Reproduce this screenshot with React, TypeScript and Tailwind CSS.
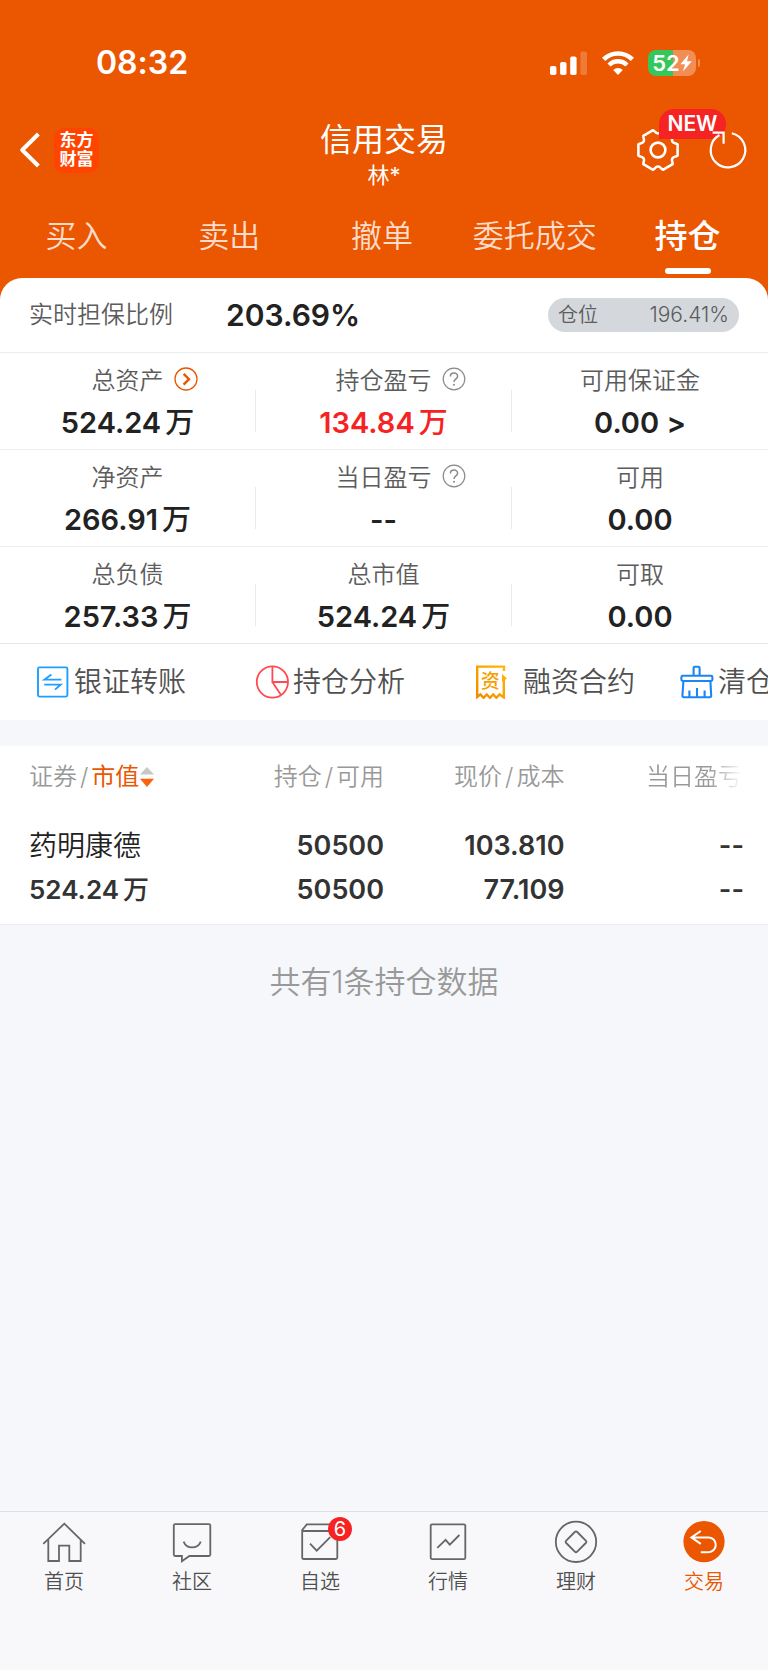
import React from 'react';

const GEAR_PATH = (() => {
  const pt = (deg: number, r: number) => {
    const a = (deg * Math.PI) / 180;
    return `${(22 + r * Math.cos(a)).toFixed(2)} ${(22 + r * Math.sin(a)).toFixed(2)}`;
  };
  let d = '';
  for (let k = 0; k < 6; k++) {
    const t = k * 60;
    d += `${k === 0 ? 'M' : 'L'}${pt(t - 16, 20.4)}`;
    d += ` L${pt(t + 16, 20.4)}`;
    d += ` L${pt(t + 20, 18.8)} Q${pt(t + 30, 14.6)} ${pt(t + 40, 18.8)} `;
  }
  return d + 'Z';
})();

function StatusBar() {
  return (
    <div className="flex h-[122px] items-center justify-between pt-1 pr-[68px] pl-24">
      <span className="text-[32px] leading-10 font-semibold">08:32</span>
      <div className="flex items-center gap-[13px]">
        <svg width="38" height="26" viewBox="0 0 38 26" fill="#fff" aria-hidden="true">
          <rect x="0" y="16" width="6.4" height="9" rx="1.8" />
          <rect x="10.1" y="12" width="6.4" height="13" rx="1.8" />
          <rect x="20.2" y="6.5" width="6.4" height="18.5" rx="1.8" />
          <rect x="30.4" y="1.5" width="6.6" height="23.5" rx="1.8" opacity="0.22" />
        </svg>
        <svg width="34" height="26" viewBox="0 0 34 26" fill="none" stroke="#fff" aria-hidden="true">
          <path d="M2.6 9.4 A20.4 20.4 0 0 1 31.4 9.4" strokeWidth="4.6" />
          <path d="M8 15 A12.8 12.8 0 0 1 26 15" strokeWidth="4.4" />
          <path d="M17 25 L12.2 20.1 A6.8 6.8 0 0 1 21.8 20.1 Z" fill="#fff" stroke="none" />
        </svg>
        <div className="flex items-center gap-0.5">
          <div className="flex h-[26px] w-12 items-center justify-center overflow-hidden rounded-lg bg-linear-to-r from-[#34c759] from-52% to-[#f28e55] to-52%">
            <span className="text-[22px] leading-6 font-semibold">52</span>
            <svg width="12" height="18" viewBox="0 0 12 18" fill="#fff" aria-hidden="true">
              <path d="M8.6 0.5 L0.4 10.2 H5 L3 17.6 L11.8 7.2 H7 Z" />
            </svg>
          </div>
          <span className="h-2 w-0.5 rounded-r-full bg-[#f28e55]" />
        </div>
      </div>
    </div>
  );
}

function TitleBar() {
  return (
    <div className="grid grid-cols-[1fr_auto_1fr] items-start">
      <div className="flex h-14 items-center gap-2.5 pl-4">
        <button type="button" aria-label="返回">
          <svg width="28" height="40" viewBox="0 0 28 40" fill="none" stroke="#fff" strokeWidth="4" strokeLinejoin="round">
            <path d="M22.4 4 L6.2 20 L22.4 36" />
          </svg>
        </button>
        <a
          href="#home"
          className="flex size-[45px] flex-col items-center justify-center rounded-[10px] bg-[#ff4400] text-[17px] leading-[19px] font-bold"
        >
          <span>东方</span>
          <span>财富</span>
        </a>
      </div>
      <div className="text-center">
        <h1 className="text-[32px] leading-9">信用交易</h1>
        <p className="text-[22px] leading-[34px]">林*</p>
      </div>
      <div className="flex h-14 items-center justify-end gap-[26px] pr-[18px]">
        <button type="button" aria-label="设置" className="relative">
          <svg width="44" height="44" viewBox="0 0 44 44" fill="none" stroke="#fff" strokeWidth="2.6" strokeLinejoin="round">
            <path d={GEAR_PATH} />
            <circle cx="22" cy="22" r="7.4" />
          </svg>
          <span className="absolute -top-[19px] left-[23px] flex h-[30px] w-[67px] items-center justify-center rounded-[15px] rounded-bl-none bg-[#f52323] text-[21px] leading-6 font-semibold">
            NEW
          </span>
        </button>
        <button type="button" aria-label="刷新" className="relative">
          <svg width="44" height="44" viewBox="0 0 44 44" fill="none" stroke="#fff" strokeWidth="2.2">
            <path d="M25.8 5.2 A17.3 17.3 0 1 1 13.5 7" />
            <path d="M6.6 4.6 H17.6 V15.8" />
          </svg>
        </button>
      </div>
    </div>
  );
}

function Tabs() {
  const tabs = ['买入', '卖出', '撤单', '委托成交', '持仓'];
  return (
    <nav className="grid grid-cols-5 pt-5 pr-1 pb-1">
      {tabs.map((t) => {
        const active = t === '持仓';
        return (
          <button key={t} type="button" className="flex flex-col items-center gap-2">
            <span
              className={
                active
                  ? 'text-[33px] leading-12 font-medium whitespace-nowrap'
                  : 'text-[31px] leading-12 font-[350] whitespace-nowrap text-[#fcdccb]'
              }
            >
              {t}
            </span>
            {active && <span className="h-1.5 w-[46px] rounded-full bg-white" />}
          </button>
        );
      })}
    </nav>
  );
}

function Hint() {
  return (
    <svg width="24" height="24" viewBox="0 0 24 24" fill="none" stroke="#8a8a8a" strokeWidth="1.2" aria-hidden="true">
      <circle cx="12" cy="12" r="10.8" />
      <path d="M8.4 9.4 C8.4 4.9 15.6 4.9 15.6 9.2 C15.6 12 12 11.8 12 15" strokeWidth="1.5" />
      <circle cx="12" cy="17.8" r="1" fill="#8a8a8a" stroke="none" />
    </svg>
  );
}

function More() {
  return (
    <svg width="24" height="24" viewBox="0 0 24 24" fill="none" stroke="#eb5600" aria-hidden="true">
      <circle cx="12" cy="12" r="11" strokeWidth="1.3" />
      <path d="M9.6 6.8 L15 12.2 L9.6 17.6" strokeWidth="2.4" />
    </svg>
  );
}

type Stat = { label: string; value: string; unit?: string; icon?: 'more' | 'hint'; red?: boolean };

const STATS: Stat[][] = [
  [
    { label: '总资产', value: '524.24', unit: '万', icon: 'more' },
    { label: '持仓盈亏', value: '134.84', unit: '万', icon: 'hint', red: true },
    { label: '可用保证金', value: '0.00 >' },
  ],
  [
    { label: '净资产', value: '266.91', unit: '万' },
    { label: '当日盈亏', value: '--', icon: 'hint' },
    { label: '可用', value: '0.00' },
  ],
  [
    { label: '总负债', value: '257.33', unit: '万' },
    { label: '总市值', value: '524.24', unit: '万' },
    { label: '可取', value: '0.00' },
  ],
];

function StatCell({ stat, last }: { stat: Stat; last: boolean }) {
  return (
    <div className="flex items-end">
      <div className="min-w-0 flex-1 pb-2">
        <div className="grid grid-cols-[1fr_auto_1fr] items-center">
          <span className="col-start-2 text-2xl leading-8 font-[350] text-[#5c5c5c]">{stat.label}</span>
          {stat.icon && (
            <span className="pb-1 pl-2.5">{stat.icon === 'more' ? <More /> : <Hint />}</span>
          )}
        </div>
        <div
          className={
            stat.red
              ? 'mt-2 text-center text-[29px] leading-9 font-semibold text-[#f52323]'
              : 'mt-2 text-center text-[29px] leading-9 font-semibold text-[#222]'
          }
        >
          {stat.value}
          {stat.unit && <span className="pl-1 font-medium">{stat.unit}</span>}
        </div>
      </div>
      {!last && <span className="mb-[17px] h-[42px] w-px bg-[#ebebeb]" />}
    </div>
  );
}

function TransferIcon() {
  return (
    <svg width="34" height="34" viewBox="0 0 34 34" fill="none" stroke="#1e9fff" strokeWidth="1.9" aria-hidden="true">
      <rect x="2" y="2.4" width="29.4" height="29.2" rx="1.5" />
      <path d="M15.4 9.6 L8.6 14.6 H25.4 M8.2 19.6 H24.6 L19 24.6" />
    </svg>
  );
}

function PieIcon() {
  return (
    <svg width="34" height="34" viewBox="0 0 34 34" fill="none" stroke="#ff4b52" strokeWidth="1.8" aria-hidden="true">
      <circle cx="17.4" cy="17" r="15.6" />
      <path d="M17.4 1.4 V17 H33 M17.4 17 L26 30" />
    </svg>
  );
}

function ReceiptIcon() {
  return (
    <svg width="34" height="34" viewBox="0 0 34 34" fill="none" aria-hidden="true">
      <defs>
        <linearGradient id="receipt" x1="0" y1="1" x2="1" y2="0">
          <stop offset="0" stopColor="#f08c00" />
          <stop offset="1" stopColor="#ffb800" />
        </linearGradient>
      </defs>
      <path
        d="M31 6 V1.6 H4.2 V32 L7.4 29.4 L10.6 32.8 L13.8 29.4 L17 32.8 L20.2 29.4 L23.4 32.8 L26.6 29.4 L30.8 32.4 V13"
        stroke="url(#receipt)"
        strokeWidth="2.4"
      />
      <path d="M29 9 L34 13.4 L29 17 Z" fill="#ffb000" />
      <text x="17.2" y="23" textAnchor="middle" fontSize="19" fontWeight="500" fill="#f79f00">
        资
      </text>
    </svg>
  );
}

function BrushIcon() {
  return (
    <svg width="34" height="34" viewBox="0 0 34 34" fill="none" stroke="#1a86f5" strokeWidth="2.1" strokeLinejoin="round" aria-hidden="true">
      <path d="M13.6 10.8 V3 Q13.6 1.8 14.8 1.8 H18.4 Q19.6 1.8 19.6 3 V10.8" />
      <rect x="1.4" y="10.8" width="31" height="5.2" rx="1.4" />
      <path d="M3.4 16 L2.4 30.6 Q2.4 32.2 4 32.2 H29.6 Q31.4 32.2 31.2 30.6 L30.4 16" />
      <path d="M9.4 32 V25.6 M17 32 V23 M24.6 32 V25.6" />
    </svg>
  );
}

function Shortcuts() {
  const label = 'text-[28px] leading-9 font-[350] whitespace-nowrap text-[#505050]';
  return (
    <div className="grid h-[76px] grid-cols-[219px_218px_207px_160px] items-center overflow-hidden pl-9">
      <a href="#transfer" className="flex items-center gap-1">
        <TransferIcon />
        <span className={label}>银证转账</span>
      </a>
      <a href="#analysis" className="flex items-center gap-1">
        <PieIcon />
        <span className={label}>持仓分析</span>
      </a>
      <a href="#contracts" className="flex items-center gap-4">
        <ReceiptIcon />
        <span className={label}>融资合约</span>
      </a>
      <a href="#cleared" className="flex items-center gap-1">
        <BrushIcon />
        <span className={label}>清仓</span>
      </a>
    </div>
  );
}

function Holdings() {
  return (
    <table className="w-full table-fixed border-b border-[#ededf2] bg-white text-right">
      <thead className="text-2xl leading-8 text-[#999]">
        <tr className="h-[62px]">
          <th scope="col" className="w-[25%] pl-[29px] text-left font-[350]">
            <button type="button" className="flex items-center whitespace-nowrap">
              <span>证券</span>
              <span className="px-[3px]">/</span>
              <span className="font-normal text-[#eb5600]">市值</span>
              <svg width="16" height="24" viewBox="0 0 16 24" aria-hidden="true">
                <path d="M1 9.6 L8 2 L15 9.6 Z" fill="#c8c8c8" />
                <path d="M1 13.8 L8 22 L15 13.8 Z" fill="#fb620c" />
              </svg>
            </button>
          </th>
          <th scope="col" className="w-[25%] font-[350] whitespace-nowrap">
            持仓<span className="px-[3px]">/</span>可用
          </th>
          <th scope="col" className="w-[23.5%] font-[350] whitespace-nowrap">
            现价<span className="px-[3px]">/</span>成本
          </th>
          <th scope="col" className="pr-[26px] font-[350] whitespace-nowrap">
            <span className="bg-linear-to-r from-[#999] from-65% to-white bg-clip-text text-transparent">当日盈亏</span>
          </th>
        </tr>
      </thead>
      <tbody className="text-[27px] leading-11 font-semibold text-[#333]">
        <tr>
          <td className="pt-4 pb-3 pl-[29px] text-left whitespace-nowrap">
            <div className="text-[28px] leading-11 font-[350] text-[#222]">药明康德</div>
            <div className="text-[26px] leading-11">
              524.24<span className="pl-1 font-medium">万</span>
            </div>
          </td>
          <td className="pt-4 pb-3">
            <div>50500</div>
            <div>50500</div>
          </td>
          <td className="pt-4 pb-3">
            <div>103.810</div>
            <div>77.109</div>
          </td>
          <td className="pt-4 pr-6 pb-3">
            <div>--</div>
            <div>--</div>
          </td>
        </tr>
      </tbody>
    </table>
  );
}

function BottomNav() {
  const items = [
    {
      label: '首页',
      art: (
        <path d="M1.3 23.8 L22.3 3.7 L43 23.8 M6.3 19.4 V41 H17 V25.7 H27.3 V41 H38.7 V19.4" />
      ),
    },
    {
      label: '社区',
      art: (
        <>
          <path d="M5.2 4.2 H38.9 Q40.3 4.2 40.3 5.6 V34.6 Q40.3 36 38.9 36 H19.4 L11.9 41.2 V36 H5.2 Q3.8 36 3.8 34.6 V5.6 Q3.8 4.2 5.2 4.2 Z" />
          <path d="M13.6 21.6 C16.8 29.4 27.4 29.4 30.8 21.6" />
        </>
      ),
    },
    {
      label: '自选',
      badge: '6',
      art: (
        <>
          <path d="M39.3 11 V37.6 Q39.3 39 37.9 39 H5.6 Q4.2 39 4.2 37.6 V10 L8.8 4.4 H34.8 L39.3 10 M4.2 11 H39.3" />
          <path d="M12 23.6 L18.7 30.6 L32.2 17.2" />
        </>
      ),
    },
    {
      label: '行情',
      art: (
        <>
          <rect x="4.7" y="4.3" width="34.6" height="34.8" rx="1.4" />
          <path d="M11.3 27.8 L19.6 19.8 L23.8 24.6 L33.4 15" />
        </>
      ),
    },
    {
      label: '理财',
      art: (
        <>
          <circle cx="22" cy="21.8" r="20.2" />
          <path d="M20.8 12 Q22 10.8 23.2 12 L31.8 20.6 Q33 21.8 31.8 23 L23.2 31.6 Q22 32.8 20.8 31.6 L12.2 23 Q11 21.8 12.2 20.6 Z" />
        </>
      ),
    },
    {
      label: '交易',
      active: true,
      art: (
        <>
          <circle cx="22" cy="21.6" r="20.6" fill="#eb5600" stroke="none" />
          <path d="M18.8 11 L9.4 17.4 L18.8 23.8 M9.4 17.4 H26.4 A7.4 7.4 0 0 1 26.4 32.2 H18.8" stroke="#fff" strokeWidth="2" />
        </>
      ),
    },
  ];
  return (
    <nav className="grid h-[159px] grid-cols-6 items-start border-t border-[#dfe0e3] bg-[#f8f8fb] pt-2">
      {items.map((it) => (
        <a key={it.label} href={`#${it.label}`} className="flex flex-col items-center gap-1">
          <span className="relative">
            <svg width="44" height="44" viewBox="0 0 44 44" fill="none" stroke="#666" strokeWidth="1.8" aria-hidden="true">
              {it.art}
            </svg>
            {it.badge && (
              <span className="absolute -top-[3px] left-[30px] flex size-6 items-center justify-center rounded-full bg-[#f52323] text-xl leading-6 text-white">
                {it.badge}
              </span>
            )}
          </span>
          <span className={it.active ? 'text-xl leading-7 font-[350] text-[#eb5600]' : 'text-xl leading-7 font-[350] text-[#505050]'}>
            {it.label}
          </span>
        </a>
      ))}
    </nav>
  );
}

export default function App() {
  return (
    <div className="flex min-h-screen flex-col overflow-x-hidden bg-[#f6f7fa] font-['Inter','Noto_Sans_CJK_SC',sans-serif] text-[#222] [font-feature-settings:'calt'_0]">
      <header className="bg-[#eb5600] text-white">
        <StatusBar />
        <TitleBar />
        <Tabs />
      </header>
      <main className="flex-1">
        <div className="bg-[#eb5600]">
          <section className="rounded-t-[22px] bg-white">
            <div className="flex h-[74px] items-center pr-[29px] pl-[29px]">
              <span className="text-2xl leading-8 font-[350] text-[#5c5c5c]">实时担保比例</span>
              <span className="ml-[53px] text-[30px] leading-9 font-semibold">203.69%</span>
              <span className="ml-auto flex h-[34px] w-[191px] items-center justify-between rounded-full bg-[#d4d7dc] px-2.5 text-[21px] leading-6 font-[350] text-[#5c5c5c]">
                <span className="text-xl leading-6">仓位</span>
                <span>196.41%</span>
              </span>
            </div>
            {STATS.map((row, i) => (
              <div key={i} className="grid h-[97px] grid-cols-3 items-end border-t border-[#ededed]">
                {row.map((s, j) => (
                  <StatCell key={s.label} stat={s} last={j === 2} />
                ))}
              </div>
            ))}
            <div className="border-t border-[#e6e6e6]">
              <Shortcuts />
            </div>
          </section>
        </div>
        <div className="pt-[26px]">
          <Holdings />
          <p className="pt-[37px] text-center text-[31px] leading-10 font-[350] text-[#999]">共有1条持仓数据</p>
        </div>
      </main>
      <BottomNav />
    </div>
  );
}
